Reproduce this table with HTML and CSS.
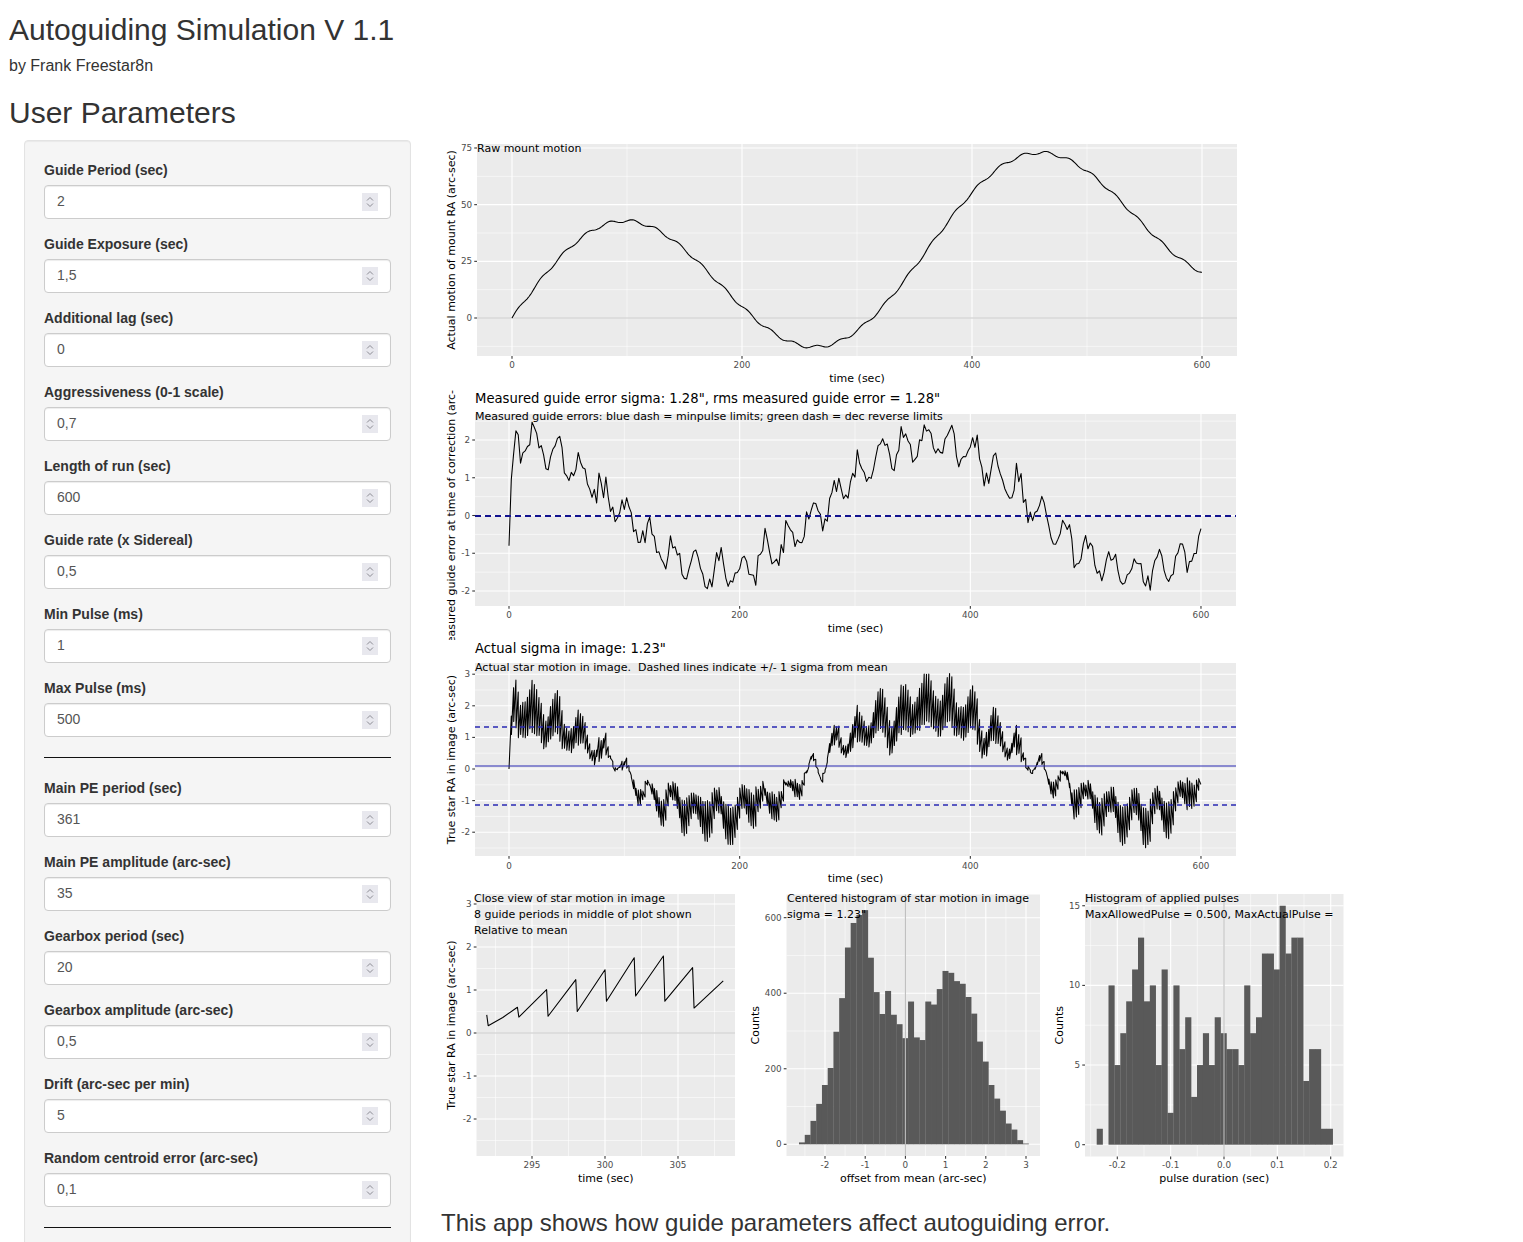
FILE: index.html
```html
<!DOCTYPE html>
<html lang="en">
<head>
<meta charset="utf-8">
<title>Autoguiding Simulation V 1.1</title>
<link rel="stylesheet" href="styles.css">
</head>
<body>
<div class="page">
  <h2 class="title">Autoguiding Simulation V 1.1</h2>
  <div class="byline">by Frank Freestar8n</div>
  <h2 class="section">User Parameters</h2>
  <div class="layout">
    <aside class="side">
      <form class="well">
        <div class="field"><label>Guide Period (sec)</label><div class="num"><span class="val">2</span><span class="spin"><svg width="8" height="12" viewBox="0 0 8 12"><path d="M1 4.5 L4 1.5 L7 4.5 M1 7.5 L4 10.5 L7 7.5"/></svg></span></div></div>
        <div class="field"><label>Guide Exposure (sec)</label><div class="num"><span class="val">1,5</span><span class="spin"><svg width="8" height="12" viewBox="0 0 8 12"><path d="M1 4.5 L4 1.5 L7 4.5 M1 7.5 L4 10.5 L7 7.5"/></svg></span></div></div>
        <div class="field"><label>Additional lag (sec)</label><div class="num"><span class="val">0</span><span class="spin"><svg width="8" height="12" viewBox="0 0 8 12"><path d="M1 4.5 L4 1.5 L7 4.5 M1 7.5 L4 10.5 L7 7.5"/></svg></span></div></div>
        <div class="field"><label>Aggressiveness (0-1 scale)</label><div class="num"><span class="val">0,7</span><span class="spin"><svg width="8" height="12" viewBox="0 0 8 12"><path d="M1 4.5 L4 1.5 L7 4.5 M1 7.5 L4 10.5 L7 7.5"/></svg></span></div></div>
        <div class="field"><label>Length of run (sec)</label><div class="num"><span class="val">600</span><span class="spin"><svg width="8" height="12" viewBox="0 0 8 12"><path d="M1 4.5 L4 1.5 L7 4.5 M1 7.5 L4 10.5 L7 7.5"/></svg></span></div></div>
        <div class="field"><label>Guide rate (x Sidereal)</label><div class="num"><span class="val">0,5</span><span class="spin"><svg width="8" height="12" viewBox="0 0 8 12"><path d="M1 4.5 L4 1.5 L7 4.5 M1 7.5 L4 10.5 L7 7.5"/></svg></span></div></div>
        <div class="field"><label>Min Pulse (ms)</label><div class="num"><span class="val">1</span><span class="spin"><svg width="8" height="12" viewBox="0 0 8 12"><path d="M1 4.5 L4 1.5 L7 4.5 M1 7.5 L4 10.5 L7 7.5"/></svg></span></div></div>
        <div class="field"><label>Max Pulse (ms)</label><div class="num"><span class="val">500</span><span class="spin"><svg width="8" height="12" viewBox="0 0 8 12"><path d="M1 4.5 L4 1.5 L7 4.5 M1 7.5 L4 10.5 L7 7.5"/></svg></span></div></div>
        <hr class="rule">
        <div class="field"><label>Main PE period (sec)</label><div class="num"><span class="val">361</span><span class="spin"><svg width="8" height="12" viewBox="0 0 8 12"><path d="M1 4.5 L4 1.5 L7 4.5 M1 7.5 L4 10.5 L7 7.5"/></svg></span></div></div>
        <div class="field"><label>Main PE amplitude (arc-sec)</label><div class="num"><span class="val">35</span><span class="spin"><svg width="8" height="12" viewBox="0 0 8 12"><path d="M1 4.5 L4 1.5 L7 4.5 M1 7.5 L4 10.5 L7 7.5"/></svg></span></div></div>
        <div class="field"><label>Gearbox period (sec)</label><div class="num"><span class="val">20</span><span class="spin"><svg width="8" height="12" viewBox="0 0 8 12"><path d="M1 4.5 L4 1.5 L7 4.5 M1 7.5 L4 10.5 L7 7.5"/></svg></span></div></div>
        <div class="field"><label>Gearbox amplitude (arc-sec)</label><div class="num"><span class="val">0,5</span><span class="spin"><svg width="8" height="12" viewBox="0 0 8 12"><path d="M1 4.5 L4 1.5 L7 4.5 M1 7.5 L4 10.5 L7 7.5"/></svg></span></div></div>
        <div class="field"><label>Drift (arc-sec per min)</label><div class="num"><span class="val">5</span><span class="spin"><svg width="8" height="12" viewBox="0 0 8 12"><path d="M1 4.5 L4 1.5 L7 4.5 M1 7.5 L4 10.5 L7 7.5"/></svg></span></div></div>
        <div class="field"><label>Random centroid error (arc-sec)</label><div class="num"><span class="val">0,1</span><span class="spin"><svg width="8" height="12" viewBox="0 0 8 12"><path d="M1 4.5 L4 1.5 L7 4.5 M1 7.5 L4 10.5 L7 7.5"/></svg></span></div></div>
        <hr class="rule">
      </form>
    </aside>
    <main class="main">
      <svg id="p1" class="plot" width="800" height="250" viewBox="441 140 800 250" role="img" aria-label="Raw mount motion"></svg>
      <svg id="p2" class="plot" width="800" height="250" viewBox="441 390 800 250" role="img" aria-label="Measured guide error"></svg>
      <svg id="p3" class="plot" width="800" height="250" viewBox="441 640 800 250" role="img" aria-label="Actual star motion"></svg>
      <div class="small-row">
        <svg id="p4" class="plot" width="300" height="300" viewBox="441 890 300 300" role="img" aria-label="Close view of star motion"></svg>
        <svg id="p5" class="plot" width="304" height="300" viewBox="741 890 304 300" role="img" aria-label="Centered histogram"></svg>
        <svg id="p6" class="plot" width="304" height="300" viewBox="1045 890 304 300" role="img" aria-label="Histogram of applied pulses"></svg>
      </div>
      <h3 class="note">This app shows how guide parameters affect autoguiding error.</h3>
    </main>
  </div>
</div>
<script src="plots.js"></script>
</body>
</html>
```

FILE: styles.css
```css
* { box-sizing: border-box; }
html, body { margin: 0; padding: 0; background: #fff; }
body {
  font-family: "Liberation Sans", Arial, Helvetica, sans-serif;
  font-size: 14px;
  line-height: 1.42857;
  color: #333;
}
.page { padding: 13px 9px 0 9px; }
.title {
  margin: 0;
  font-size: 30px;
  line-height: 33px;
  font-weight: normal;
}
.byline {
  margin-top: 10px;
  font-size: 16px;
  line-height: 20px;
}
.section {
  margin: 19.5px 0 0 0;
  font-size: 30px;
  line-height: 33px;
  font-weight: normal;
}
.layout {
  display: flex;
  align-items: flex-start;
  margin-top: 11.5px;
}
.side {
  flex: none;
  width: 417px;
  padding: 0 15px;
}
.well {
  margin: 0;
  background: #f5f5f5;
  border: 1px solid #e3e3e3;
  border-radius: 4px;
  padding: 19px;
  box-shadow: inset 0 1px 1px rgba(0, 0, 0, 0.05);
}
.field { margin-bottom: 15px; }
.field label {
  display: block;
  font-weight: bold;
  line-height: 20px;
  margin-bottom: 5px;
  color: #333;
}
.num {
  display: flex;
  align-items: center;
  height: 34px;
  padding: 0 12px;
  background: #fff;
  border: 1px solid #ccc;
  border-radius: 4px;
  box-shadow: inset 0 1px 1px rgba(0, 0, 0, 0.075);
  color: #555;
  font-size: 14px;
}
.val { flex: 1; }
.spin {
  flex: none;
  width: 16px;
  height: 18px;
  background: #e8e8ee;
  display: flex;
  align-items: center;
  justify-content: center;
}
.spin svg { display: block; }
.spin path { fill: none; stroke: #8c8c94; stroke-width: 1; }
.rule {
  border: 0;
  border-top: 1px solid #111;
  margin: 20px 0;
  height: 0;
}
.main {
  flex: 1;
  padding-left: 15px;
}
.plot { display: block; }
.small-row { display: flex; }
.plot text { font-family: "DejaVu Sans", "Liberation Sans", sans-serif; }
.plot .tick { font-size: 8.8px; fill: #4d4d4d; }
.plot .axt { font-size: 11px; fill: #000; }
.plot .ann { font-size: 11px; fill: #000; }
.plot .ptitle { font-size: 13.2px; fill: #000; }
.note {
  margin: 20px 0 0 0;
  font-size: 24px;
  line-height: 26.4px;
  font-weight: normal;
  color: #333;
}
```

FILE: plots.js
```js
(function () {
  var NS = 'http://www.w3.org/2000/svg';
  function el(p, tag, a, txt) {
    var e = document.createElementNS(NS, tag);
    for (var k in a) e.setAttribute(k, a[k]);
    if (txt != null) e.textContent = txt;
    p.appendChild(e);
    return e;
  }
  var seed = 424242;
  function rand() {
    seed |= 0; seed = seed + 0x6D2B79F5 | 0;
    var t = Math.imul(seed ^ seed >>> 15, 1 | seed);
    t = t + Math.imul(t ^ t >>> 7, 61 | t) ^ t;
    return ((t ^ t >>> 14) >>> 0) / 4294967296;
  }
  function gauss() {
    var u = 0; while (u === 0) u = rand();
    var v = rand();
    return Math.sqrt(-2 * Math.log(u)) * Math.cos(2 * Math.PI * v);
  }

  function frame(svg, c) {
    var g = el(svg, 'g', {});
    var x0 = c.px[0], x1 = c.px[1], y0 = c.py[0], y1 = c.py[1];
    el(g, 'rect', { x: x0, y: y0, width: x1 - x0, height: y1 - y0, fill: '#EBEBEB' });
    c.yMin.forEach(function (v) { var y = c.ym(v); if (y > y0 && y < y1) el(g, 'line', { x1: x0, x2: x1, y1: y, y2: y, stroke: '#fff', 'stroke-width': 0.55 }); });
    c.xMin.forEach(function (v) { var x = c.xm(v); if (x > x0 && x < x1) el(g, 'line', { x1: x, x2: x, y1: y0, y2: y1, stroke: '#fff', 'stroke-width': 0.55 }); });
    c.yMaj.forEach(function (v) { var y = c.ym(v); el(g, 'line', { x1: x0, x2: x1, y1: y, y2: y, stroke: '#fff', 'stroke-width': 1.1 }); });
    c.xMaj.forEach(function (v) { var x = c.xm(v); el(g, 'line', { x1: x, x2: x, y1: y0, y2: y1, stroke: '#fff', 'stroke-width': 1.1 }); });
    var yf = c.yFmt || String, xf = c.xFmt || String;
    c.yMaj.forEach(function (v) {
      var y = c.ym(v);
      el(g, 'line', { x1: x0 - 2.75, x2: x0, y1: y, y2: y, stroke: '#333', 'stroke-width': 1.07 });
      el(g, 'text', { x: x0 - 4.9, y: y, 'text-anchor': 'end', 'dominant-baseline': 'central', 'class': 'tick' }, yf(v));
    });
    c.xMaj.forEach(function (v) {
      var x = c.xm(v);
      el(g, 'line', { x1: x, x2: x, y1: y1, y2: y1 + 2.75, stroke: '#333', 'stroke-width': 1.07 });
      el(g, 'text', { x: x, y: c.xTickY, 'text-anchor': 'middle', 'dominant-baseline': 'central', 'class': 'tick' }, xf(v));
    });
    el(g, 'text', { x: (x0 + x1) / 2, y: c.xTitleY, 'text-anchor': 'middle', 'dominant-baseline': 'central', 'class': 'axt' }, c.xTitle);
    el(g, 'text', { transform: 'translate(' + c.yTitleX + ',' + ((y0 + y1) / 2) + ') rotate(-90)', 'text-anchor': 'middle', 'dominant-baseline': 'central', 'class': 'axt' }, c.yTitle);
    return g;
  }
  function path(pts, c) {
    var d = '';
    for (var i = 0; i < pts.length; i++) {
      d += (i ? 'L' : 'M') + c.xm(pts[i][0]).toFixed(2) + ' ' + c.ym(pts[i][1]).toFixed(2);
    }
    return d;
  }
  function hline(svg, c, v, attrs) {
    var y = Math.round(c.ym(v));
    var a = { x1: c.px[0], x2: c.px[1], y1: y, y2: y };
    for (var k in attrs) a[k] = attrs[k];
    return el(svg, 'line', a);
  }
  function ann(svg, x, y, txt, cls) {
    return el(svg, 'text', { x: x, y: y, 'dominant-baseline': 'central', 'class': cls || 'ann' }, txt);
  }

  var TAU = 2 * Math.PI;
  function mount(t) { return 35 * Math.sin(TAU * t / 361) + t / 12 + 0.5 * Math.sin(TAU * t / 20); }

  /* ---------- Plot 1: raw mount motion ---------- */
  var p1 = document.getElementById('p1');
  var c1 = {
    px: [477, 1237], py: [144, 356],
    xm: function (t) { return 512 + 1.15 * t; },
    ym: function (v) { return 318 - 2.2667 * v; },
    xMaj: [0, 200, 400, 600], xMin: [100, 300, 500],
    yMaj: [0, 25, 50, 75], yMin: [-12.5, 12.5, 37.5, 62.5],
    xTickY: 365, xTitleY: 378, yTitleX: 451,
    xTitle: 'time (sec)', yTitle: 'Actual motion of mount RA (arc-sec)'
  };
  frame(p1, c1);
  hline(p1, c1, 0, { stroke: '#c6c6c6', 'stroke-width': 1.1 });
  var pts1 = [];
  for (var t = 0; t <= 600; t += 1) pts1.push([t, 35 * Math.sin(TAU * t / 361) + t / 12 + 0.7 * Math.sin(TAU * t / 20)]);
  el(p1, 'path', { d: path(pts1, c1), fill: 'none', stroke: '#000', 'stroke-width': 1.07, 'stroke-linejoin': 'round' });
  ann(p1, 477, 148, 'Raw mount motion');

  /* ---------- simulation ---------- */
  var dt = 0.1, N = 6000, corr = 0, ar = 0;
  var s = new Array(N + 1), meas = [[0, -0.8]];
  for (var i = 0; i <= N; i++) {
    var tt = i * dt;
    s[i] = mount(tt) - corr;
    if (i > 0 && i % 20 === 0) {
      var sum = 0;
      for (var j = i - 15; j <= i; j++) sum += s[j];
      ar = 0.75 * ar + 0.09 * gauss();
      var avg = sum / 16 + 0.1 * gauss() + ar;
      meas.push([tt, avg]);
      corr += 0.7 * avg;
    }
  }

  /* ---------- Plot 2: measured guide error ---------- */
  var p2 = document.getElementById('p2');
  var c2 = {
    px: [475, 1236], py: [414, 606],
    xm: function (t) { return 509 + 1.1533 * t; },
    ym: function (v) { return 515.5 - 37.75 * v; },
    xMaj: [0, 200, 400, 600], xMin: [100, 300, 500],
    yMaj: [-2, -1, 0, 1, 2], yMin: [-1.5, -0.5, 0.5, 1.5, 2.5],
    xTickY: 615, xTitleY: 628, yTitleX: 451,
    xTitle: 'time (sec)', yTitle: 'Measured guide error at time of correction (arc-sec)'
  };
  frame(p2, c2);
  el(p2, 'path', { d: path(meas, c2), fill: 'none', stroke: '#000', 'stroke-width': 1.07, 'stroke-linejoin': 'round' });
  hline(p2, c2, 0, { stroke: '#12128f', 'stroke-width': 2, 'stroke-dasharray': '6 4' });
  ann(p2, 475, 398, 'Measured guide error sigma: 1.28", rms measured guide error = 1.28"', 'ptitle');
  ann(p2, 475, 416, 'Measured guide errors: blue dash = minpulse limits; green dash = dec reverse limits');

  /* ---------- Plot 3: actual star motion ---------- */
  var p3 = document.getElementById('p3');
  var c3 = {
    px: [475, 1236], py: [663, 856],
    xm: function (t) { return 509 + 1.1533 * t; },
    ym: function (v) { return 769 - 31.6 * v; },
    xMaj: [0, 200, 400, 600], xMin: [100, 300, 500],
    yMaj: [-2, -1, 0, 1, 2, 3], yMin: [-2.5, -1.5, -0.5, 0.5, 1.5, 2.5],
    xTickY: 866, xTitleY: 878, yTitleX: 451,
    xTitle: 'time (sec)', yTitle: 'True star RA in image (arc-sec)'
  };
  frame(p3, c3);
  var pts3 = [];
  for (var k = 0; k <= N; k++) pts3.push([k * dt, s[k]]);
  el(p3, 'path', { d: path(pts3, c3), fill: 'none', stroke: '#000', 'stroke-width': 1.07, 'stroke-linejoin': 'round' });
  hline(p3, c3, 0.1, { stroke: '#2a2ab4', 'stroke-width': 1.2 });
  hline(p3, c3, 1.33, { stroke: '#2a2ab4', 'stroke-width': 1.4, 'stroke-dasharray': '5 4' });
  hline(p3, c3, -1.13, { stroke: '#2a2ab4', 'stroke-width': 1.4, 'stroke-dasharray': '5 4' });
  ann(p3, 475, 648, 'Actual sigma in image: 1.23"', 'ptitle');
  ann(p3, 475, 667, 'Actual star motion in image.  Dashed lines indicate +/- 1 sigma from mean').setAttribute('style', 'white-space: pre');

  /* ---------- Plot 4: close view ---------- */
  var p4 = document.getElementById('p4');
  var c4 = {
    px: [476.5, 735], py: [894, 1156],
    xm: function (t) { return 532 + 14.6 * (t - 295); },
    ym: function (v) { return 1033 - 43 * v; },
    xMaj: [295, 300, 305], xMin: [292.5, 297.5, 302.5, 307.5],
    yMaj: [-2, -1, 0, 1, 2, 3], yMin: [-2.5, -1.5, -0.5, 0.5, 1.5, 2.5],
    xTickY: 1165, xTitleY: 1178, yTitleX: 451,
    xTitle: 'time (sec)', yTitle: 'True star RA in image (arc-sec)'
  };
  frame(p4, c4);
  hline(p4, c4, 0, { stroke: '#c6c6c6', 'stroke-width': 1.1 });
  var pts4 = [[291.9, 0.42], [292.0, 0.17], [293.0, 0.36], [294.0, 0.6], [294.1, 0.37], [296.0, 1.01], [296.1, 0.39],
    [298.0, 1.24], [298.1, 0.5], [300.0, 1.47], [300.1, 0.74], [302.0, 1.75], [302.1, 0.86], [304.0, 1.79],
    [304.1, 0.74], [306.0, 1.52], [306.1, 0.58], [308.1, 1.21]];
  el(p4, 'path', { d: path(pts4, c4), fill: 'none', stroke: '#000', 'stroke-width': 1.07, 'stroke-linejoin': 'round' });
  ann(p4, 474, 898, 'Close view of star motion in image');
  ann(p4, 474, 914, '8 guide periods in middle of plot shown');
  ann(p4, 474, 930, 'Relative to mean');

  function hist(svg, c, start, w, counts) {
    var base = c.ym(0);
    counts.forEach(function (n, idx) {
      if (n <= 0) return;
      var y = c.ym(n);
      el(svg, 'rect', { x: (start + idx * w).toFixed(2), y: y.toFixed(2), width: (w + 0.25).toFixed(2), height: (base - y).toFixed(2), fill: '#595959' });
    });
  }

  /* ---------- Plot 5: centered histogram ---------- */
  var p5 = document.getElementById('p5');
  var c5 = {
    px: [786.5, 1040], py: [894.5, 1156],
    xm: function (v) { return 905.4 + 40.2 * v; },
    ym: function (n) { return 1144.3 - 0.3777 * n; },
    xMaj: [-2, -1, 0, 1, 2, 3], xMin: [-2.5, -1.5, -0.5, 0.5, 1.5, 2.5],
    yMaj: [0, 200, 400, 600], yMin: [100, 300, 500],
    xTickY: 1165, xTitleY: 1178, yTitleX: 755,
    xTitle: 'offset from mean (arc-sec)', yTitle: 'Counts'
  };
  frame(p5, c5);
  hist(p5, c5, 799, 5.74, [5, 25, 62, 107, 157, 202, 298, 387, 521, 586, 607, 620, 494, 403, 345, 406, 343, 318, 281, 378,
    283, 276, 378, 370, 411, 459, 454, 432, 425, 390, 346, 272, 219, 157, 121, 89, 55, 39, 11, 2]);
  el(p5, 'line', { x1: c5.xm(0), x2: c5.xm(0), y1: c5.py[0], y2: c5.py[1], stroke: '#bdbdbd', 'stroke-width': 1.1 });
  ann(p5, 787, 898, 'Centered histogram of star motion in image');
  ann(p5, 787, 914, 'sigma = 1.23"');

  /* ---------- Plot 6: pulses histogram ---------- */
  var p6 = document.getElementById('p6');
  var c6 = {
    px: [1085, 1343.5], py: [894, 1156.5],
    xm: function (v) { return 1224 + 533.5 * v; },
    ym: function (n) { return 1144.7 - 15.93 * n; },
    xMaj: [-0.2, -0.1, 0, 0.1, 0.2], xMin: [-0.25, -0.15, -0.05, 0.05, 0.15],
    yMaj: [0, 5, 10, 15], yMin: [2.5, 7.5, 12.5],
    xFmt: function (v) { return v.toFixed(1); },
    xTickY: 1165, xTitleY: 1178, yTitleX: 1059,
    xTitle: 'pulse duration (sec)', yTitle: 'Counts'
  };
  frame(p6, c6);
  hist(p6, c6, 1096.7, 5.9, [1, 0, 10, 5, 7, 9, 11, 13, 9, 10, 5, 11, 2, 10, 6, 8, 3, 5, 7, 5,
    8, 7, 6, 6, 5, 10, 7, 8, 12, 12, 11, 15, 12, 13, 13, 4, 6, 6, 1, 1]);
  el(p6, 'line', { x1: c6.xm(0), x2: c6.xm(0), y1: c6.py[0], y2: c6.py[1], stroke: '#bdbdbd', 'stroke-width': 1.1 });
  ann(p6, 1085, 898, 'Histogram of applied pulses');
  ann(p6, 1085, 914, 'MaxAllowedPulse = 0.500, MaxActualPulse =');
})();
```
